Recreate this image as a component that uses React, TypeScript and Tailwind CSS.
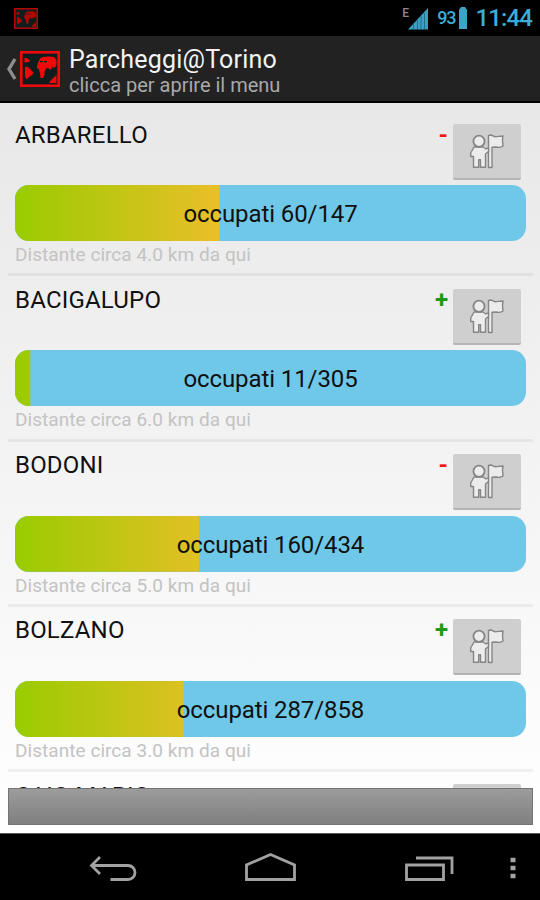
type Parking = {
  name: string;
  taken: number;
  total: number;
  km: string;
  trend: '+' | '-';
};

const parkings: Parking[] = [
  { name: 'ARBARELLO', taken: 60, total: 147, km: '4.0', trend: '-' },
  { name: 'BACIGALUPO', taken: 11, total: 305, km: '6.0', trend: '+' },
  { name: 'BODONI', taken: 160, total: 434, km: '5.0', trend: '-' },
  { name: 'BOLZANO', taken: 287, total: 858, km: '3.0', trend: '+' },
];

const MapLogo = ({ className }: { className: string }) => (
  <svg viewBox="0 0 40 36" className={className} preserveAspectRatio="none">
    <rect x="1.3" y="1.3" width="37.4" height="33.4" fill="#111c1c" stroke="currentColor" strokeWidth="2.6" />
    <path
      fill="currentColor"
      d="M4.500 7h2l3.500 2.500-1 1.500-4.500.5zM5 16h3l5.500 5.500-1 2-4 3-2 2L5 25zM17 15l1.500-4.500L20 7.500l3-1.500 5-.5 6 .5 2.500 3v5l-2 3-2-1-2.500 3-1.500-2-2.500.5-1.500 3.500v3l-1.500 3h-2.500L20 22l-1-3.500-2-1.500zM31 29l5.500-5v8H29z"
    />
    <path fill="#111c1c" d="M20 10h3v1.300h-3zM24 10h3v1.300h-3z" />
  </svg>
);

const GuideIcon = () => (
  <svg viewBox="0 0 36 36" className="h-9 w-9" fill="#ececec" stroke="#858585" strokeWidth="1.4" strokeLinejoin="round">
    <path d="M19.500 2.500l2-.5c2 0 3 1.700 5 1.700S31 3 34 3l-.5 4 .5 6c-2.500 1.500-5 1.700-7 1l-4 .3v20.200h-3.500V4z" />
    <path d="M5 14h9l3 2 2.500-1.500v4l-3 2.500v13.300h-5v-7.500h-1.800v7.500H4.500V23.500H1.700v-3.500z" />
    <circle cx="10" cy="8.300" r="5.600" strokeWidth="1.800" />
  </svg>
);

const StatusBar = () => (
  <div className="flex h-9 shrink-0 items-center bg-black pl-[14px] pr-[8px] text-[#3aaed8]">
    <MapLogo className="h-[21px] w-6 text-[#b00808]" />
    <div className="ml-auto flex items-center">
      <span className="mb-[10px] text-[12px] font-medium leading-none text-[#8a8a8a]">E</span>
      <svg viewBox="0 0 22 23" className="-ml-px h-[23px] w-[22px]">
        <path d="M0 22.500L20 1v21.500z" fill="#3a9fc4" />
        <path d="M5.500 17v5M9.500 13v9M13 9v13M16.500 6v16" stroke="#226f8c" strokeWidth="1" />
      </svg>
      <span className="ml-[7px] text-[18px] font-medium leading-none tracking-[-1px]">93</span>
      <svg viewBox="0 0 8 22" className="ml-[3px] h-[22px] w-2" fill="#3ba4c9">
        <path d="M2 0h4l2 3v19H0V3z" />
      </svg>
      <span className="ml-[9px] text-[24px] font-medium leading-none tracking-[-0.9px]">11:44</span>
    </div>
  </div>
);

const ActionBar = () => (
  <header className="flex h-[67px] shrink-0 items-center border-b-2 border-black bg-[#222222] pl-[6px]">
    <svg viewBox="0 0 11 22" className="h-[22px] w-[11px]" fill="none" stroke="#8d8d8d" strokeWidth="3.4">
      <path d="M9 1L3 11l6 10" />
    </svg>
    <MapLogo className="ml-[3px] h-9 w-10 text-[#ee0a0a]" />
    <div className="ml-[9px] flex flex-col pt-[3px]">
      <h1 className="text-[25px] leading-[29px] tracking-[0.2px] text-[#f3f3f3]">Parcheggi@Torino</h1>
      <p className="text-[20px] leading-[22px] text-[#a9a9a9]">clicca per aprire il menu</p>
    </div>
  </header>
);

const GuideButton = () => (
  <button className="flex h-14 w-[68px] items-center justify-center rounded-[2px] border-b-2 border-[#b4b4b4] bg-[#cfcfcf]">
    <GuideIcon />
  </button>
);

const ParkingRow = ({ parking }: { parking: Parking }) => {
  const percent = Math.floor((parking.taken / parking.total) * 100);

  return (
    <li className="h-[165.33px] shrink-0 border-b-[3px] border-black/5 px-[7px]">
      <div className="flex h-[74px] pr-[5px] pt-[11.500px]">
        <h2 className="text-[24px] leading-6 tracking-[0.2px] text-[#111]">{parking.name}</h2>
        <span
          className={
            parking.trend === '+'
              ? 'ml-auto mr-[5px] text-[24px] font-bold leading-6 text-[#1c9a10]'
              : 'ml-auto mr-[5px] text-[24px] font-bold leading-6 text-[#f01818]'
          }
        >
          {parking.trend}
        </span>
        <div className="pt-px">
          <GuideButton />
        </div>
      </div>
      <div className="grid h-14 overflow-hidden rounded-[14px] bg-[#70c8e9]">
        <div
          className="col-start-1 row-start-1 bg-[linear-gradient(90deg,#99cc00,#ffbb33_50%)]"
          style={{ clipPath: `inset(0 ${100 - percent}% 0 0)` }}
        />
        <span className="z-10 col-start-1 row-start-1 self-center pt-[2px] text-center text-[24px] leading-7 tracking-[-0.1px] text-[#101010]">
          occupati {parking.taken}/{parking.total}
        </span>
      </div>
      <p className="pt-[2px] text-[19px] leading-6 tracking-[0.05px] text-[#c3c3c3]">Distante circa {parking.km} km da qui</p>
    </li>
  );
};

const NavBar = () => (
  <nav className="flex h-[67px] shrink-0 items-center border-t border-[#555] bg-black">
    <svg viewBox="0 0 540 66" className="h-[66px] w-[540px]" fill="none" stroke="#a2a2a2" strokeWidth="2.8">
      <path d="M100 23l-8.500 8.500L100 40M91.500 31.500H128a7 7 0 0 1 0 14h-17.500" />
      <path d="M246.500 45.500V31l24-10.500L294.500 31v14.500z" />
      <path d="M406.500 31h37v14.500h-37zM416 24h36v16" />
      <path d="M510.500 26h5M510.500 34h5M510.500 42h5" strokeWidth="4.500" />
    </svg>
  </nav>
);

export default function App() {
  return (
    <div className="flex h-[900px] w-[540px] flex-col overflow-hidden font-[Roboto,sans-serif]">
      <StatusBar />
      <ActionBar />
      <main className="flex min-h-0 flex-1 flex-col bg-linear-to-b from-[#e8e8e8] to-white pb-2 pl-2 pr-[7px] pt-[8px]">
        <ul className="flex min-h-0 flex-1 flex-col overflow-hidden">
          {parkings.map((parking) => (
            <ParkingRow key={parking.name} parking={parking} />
          ))}
          <li className="flex shrink-0 pl-[7px] pr-3 pt-3">
            <h2 className="text-[24px] leading-6 text-[#111]">CAIO MARIO</h2>
            <div className="ml-auto">
              <GuideButton />
            </div>
          </li>
        </ul>
        <div className="h-[37px] shrink-0 border border-[#747474] bg-linear-to-b from-[#9c9c9c] to-[#808080]" />
      </main>
      <NavBar />
    </div>
  );
}
